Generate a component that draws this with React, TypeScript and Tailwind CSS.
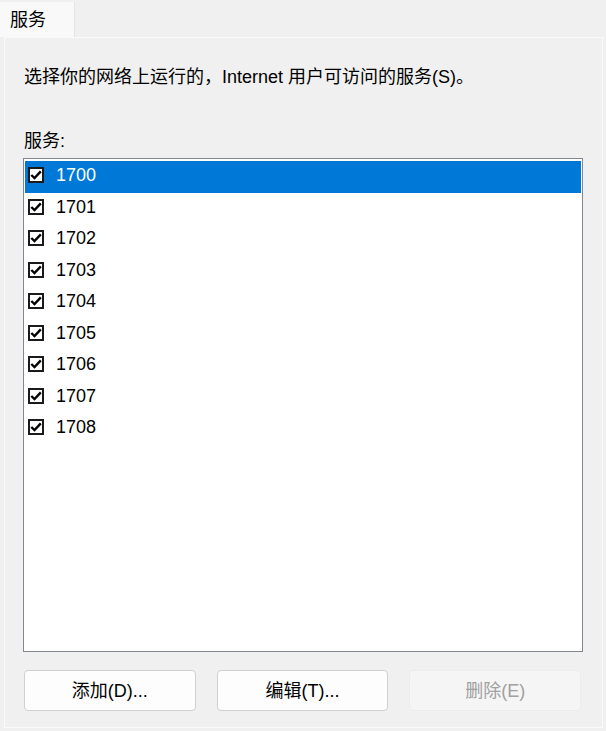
import React from "react";

const services = ["1700", "1701", "1702", "1703", "1704", "1705", "1706", "1707", "1708"];

function CheckBox() {
  return (
    <span className="flex items-center justify-center w-[16px] h-[16px] border-2 border-[#1a1a1a] bg-white shrink-0">
      <svg width="12" height="12" viewBox="0 0 12 12">
        <path d="M1.3 6 L4.5 9.1 L10.8 2.4" fill="none" stroke="#000" strokeWidth="2.4" />
      </svg>
    </span>
  );
}

export default function App() {
  return (
    <div
      className="w-[606px] h-[731px] bg-[#f0f0f0] text-black text-[18px] leading-[24px] overflow-hidden"
      style={{ fontFamily: '"Liberation Sans", "Noto Sans CJK SC", sans-serif' }}
    >
      {/* tab strip */}
      <div className="pt-[2px] flex">
        <div className="w-[75px] h-[35px] bg-[#f9f9f9] border-r border-[#e4e4e4] pl-[10px] pt-[6px]">服务</div>
      </div>

      {/* tab page */}
      <div className="ml-[4px] w-[599px] h-[691px] border border-[#fafafa] bg-[#f0f0f0] px-[18px]">
        <p className="mt-[27px] pl-[1px]">选择你的网络上运行的，Internet 用户可访问的服务(S)。</p>
        <p className="mt-[40px] pl-[1px]">服务:</p>

        <div className="mt-[5px] w-[560px] h-[494px] border border-[#828790] bg-white p-[1px] pt-[2px]">
          {services.map((s, i) => (
            <div
              key={s}
              className={`h-[31.5px] flex items-center pl-[3px] pb-[3px] gap-[12px] ${
                i === 0 ? "bg-[#0078d7] text-white" : "text-black"
              }`}
            >
              <CheckBox />
              <span>{s}</span>
            </div>
          ))}
        </div>

        <div className="mt-[18px] grid grid-cols-3 gap-[21px] w-[558px] pl-[1px]">
          <button className="h-[41px] rounded-[4px] border border-[#d0d0d0] bg-[#fdfdfd] text-black">添加(D)...</button>
          <button className="h-[41px] rounded-[4px] border border-[#d0d0d0] bg-[#fdfdfd] text-black">编辑(T)...</button>
          <button className="h-[41px] rounded-[4px] border border-[#ececec] bg-[#f5f5f5] text-[#a0a0a0]">删除(E)</button>
        </div>
      </div>
    </div>
  );
}
